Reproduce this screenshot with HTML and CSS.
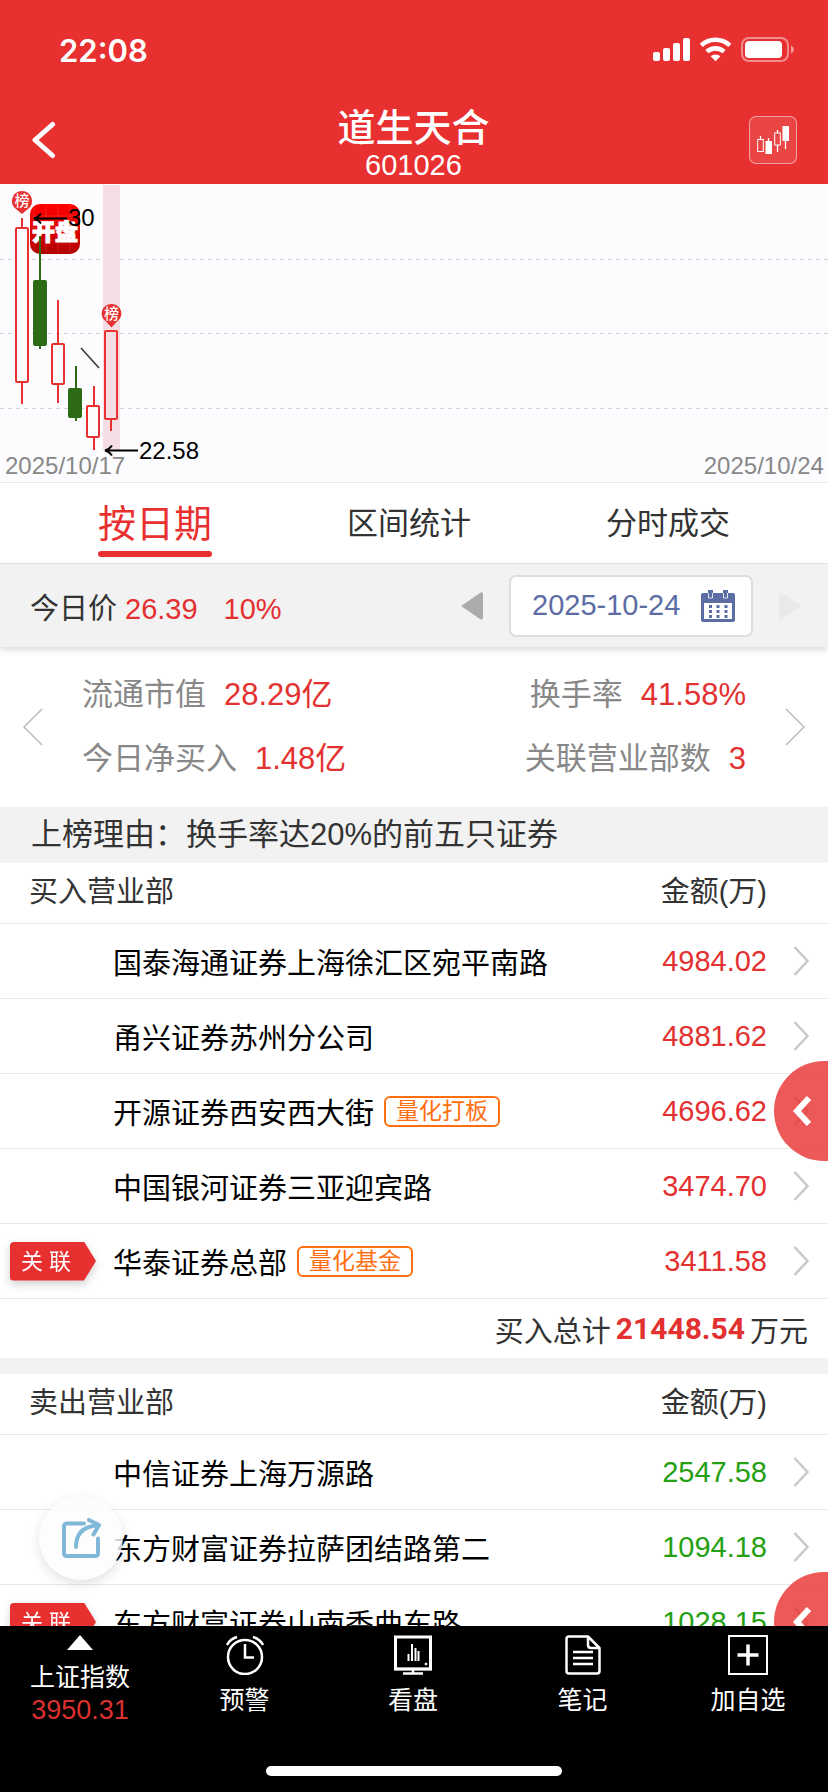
FILE: index.html
```html
<!DOCTYPE html>
<html lang="zh-CN">
<head>
<meta charset="utf-8">
<meta name="viewport" content="width=device-width, initial-scale=1">
<title>道生天合 601026</title>
<link rel="stylesheet" href="styles.css">
</head>
<body>
<div class="app">
  <header class="header">
    <div class="status">
      <span class="clock">22:08</span>
      <svg class="status-icons" width="142" height="26" viewBox="0 0 142 26" fill="#fff" aria-hidden="true">
        <rect x="0" y="15" width="7" height="9" rx="2"/><rect x="10" y="11" width="7" height="13" rx="2"/><rect x="20" y="6" width="7" height="18" rx="2"/><rect x="30" y="1" width="7" height="23" rx="2"/>
        <g fill="none" stroke="#fff" stroke-width="4.6"><path d="M48.200 8.400A21 21 0 0 1 76.800 8.400"/><path d="M53.900 14.600A13 13 0 0 1 71.100 14.600"/></g>
        <path d="M57.600 19.200A7.500 7.500 0 0 1 67.400 19.200L62.500 24.200Z"/>
        <rect x="89" y="1" width="46" height="23" rx="7" fill="none" stroke="#fff" stroke-opacity=".45" stroke-width="2"/>
        <rect x="92" y="4" width="37" height="17" rx="4"/>
        <path d="M138 8.500Q141 10 141 12.500T138 16.500Z" fill-opacity=".5"/>
      </svg>
    </div>
    <div class="nav">
      <button class="icon-btn" aria-label="返回"><svg width="26" height="38" viewBox="0 0 26 38" fill="none" stroke="#fff" stroke-width="5" stroke-linecap="round" stroke-linejoin="round"><path d="M22.500 3.500L5 19L22.500 34.500"/></svg></button>
      <div class="titles"><h1 class="title">道生天合</h1><p class="code">601026</p></div>
      <button class="icon-btn kline-btn" aria-label="K线"><svg width="34" height="30" viewBox="0 0 34 30" fill="none" stroke="#fff"><path d="M4.500 11V14M12.500 13V16M21.500 5V8M21.500 20V27M29.500 14V24" stroke-width="1.300"/><rect x="1.700" y="14.500" width="5.600" height="12"/><rect x="18.700" y="8" width="5.600" height="12"/><path fill="#fff" stroke="none" d="M9.500 16h6.500v13h-6.500zM26.500 1h6.500v15h-6.500z"/></svg></button>
    </div>
  </header>

  <main class="main">
    <section class="chart" aria-label="日K线">
      <svg class="chart-svg" width="100%" height="298">
        <defs><linearGradient id="logo" x1="0" y1="0" x2="0" y2="1"><stop offset="0" stop-color="#ff0000"/><stop offset=".5" stop-color="#e00000"/><stop offset="1" stop-color="#b00000"/></linearGradient></defs>
        <g class="grid"><line x1="0" x2="100%" y1="75.500" y2="75.500"/><line x1="0" x2="100%" y1="149.500" y2="149.500"/><line x1="0" x2="100%" y1="224.500" y2="224.500"/></g>
        <rect x="103" y="1" width="17" height="265" fill="#f5dee3"/>
        <rect x="30" y="20" width="50" height="50" rx="10" fill="url(#logo)"/>
        <path d="M34 24V66M46 21V69M58 21V69M70 21V69M31 32H79M31 44H79M31 56H79" stroke="#fff" stroke-opacity=".12"/>
        <text class="logo-text" x="55" y="56">开盘</text>
        <g class="up"><path d="M22 34V44M22 198V220M58 116V160M58 200V219M94 202V222M94 253V266M111 235V247"/><rect x="16" y="44" width="12" height="154" rx="1"/><rect x="52" y="160" width="12" height="40" rx="1"/><rect x="87" y="222" width="12" height="31" rx="1"/><rect x="105" y="147" width="12" height="88" rx="1"/></g>
        <g class="down"><path d="M40 52V165M76 182V237"/><rect x="34" y="97" width="12" height="64" rx="1"/><rect x="69" y="205" width="12" height="28" rx="1"/></g>
        <path d="M81 164L99 184" stroke="#333" stroke-width="1.500"/>
        <g fill="#e83030"><path d="M22 7a10 10 0 0 1 6 18L22 30L16 25A10 10 0 0 1 22 7Z"/><path d="M111.500 120a9.500 9.500 0 0 1 5.500 17.500L111.500 143.500L106 137.500A9.500 9.500 0 0 1 111.500 120Z"/></g>
        <text class="pin-text" x="22" y="22">榜</text><text class="pin-text" x="111.500" y="135">榜</text>
        <g fill="none" stroke="#000" stroke-width="2"><path d="M34 34.500H67M41 29.500Q38 33.500 34 34.500Q38 35.500 41 39.500M105 266.500H138M112 261.500Q109 265.500 105 266.500Q109 267.500 112 271.500"/></g>
        <text class="mark" x="68" y="42">30</text><text class="mark" x="139" y="275">22.58</text>
        <text class="date" x="5" y="290">2025/10/17</text><text class="date date-end" x="99.500%" y="290">2025/10/24</text>
      </svg>
    </section>

    <nav class="tabs">
      <button class="tab tab-active">按日期</button>
      <button class="tab">区间统计</button>
      <button class="tab">分时成交</button>
    </nav>

    <section class="pricebar">
      <p class="price"><span>今日价</span><span class="red">26.39</span><span class="red pct">10%</span></p>
      <div class="picker">
        <button class="icon-btn" aria-label="前一天"><svg width="22" height="28" viewBox="0 0 22 28" fill="#ababab"><path d="M0 14L19 1Q22 -1 22 3V25Q22 29 19 27Z"/></svg></button>
        <label class="datebox"><input class="date-input" type="text" value="2025-10-24" aria-label="日期">
          <svg width="34" height="32" viewBox="0 0 34 32" fill="#5b6da3"><path fill-rule="evenodd" d="M2 3H7V0H12V3H22V0H27V3H32Q34 3 34 5V30Q34 32 32 32H2Q0 32 0 30V5Q0 3 2 3ZM3 13V29H31V13Z"/><path d="M7.500 3V8H11.500V3M22.500 3V8H26.500V3" fill="none" stroke="#fff" stroke-width=".8"/><path d="M9.500 15V28M17 15V28M25 15V28" stroke="#5b6da3" stroke-width="3" stroke-dasharray="3 2"/></svg>
        </label>
        <button class="icon-btn" aria-label="后一天" disabled><svg width="22" height="28" viewBox="0 0 22 28" fill="#e9e9e9"><path d="M22 14L3 1Q0 -1 0 3V25Q0 29 3 27Z"/></svg></button>
      </div>
    </section>

    <section class="stats">
      <button class="icon-btn" aria-label="上一页"><svg width="20" height="38" viewBox="0 0 20 38" fill="none" stroke="#bbb" stroke-width="1.500"><path d="M19 1L1 19L19 37"/></svg></button>
      <dl class="stat-grid">
        <div class="stat"><dt>流通市值</dt><dd>28.29亿</dd></div>
        <div class="stat stat-end"><dt>换手率</dt><dd>41.58%</dd></div>
        <div class="stat"><dt>今日净买入</dt><dd>1.48亿</dd></div>
        <div class="stat stat-end"><dt>关联营业部数</dt><dd>3</dd></div>
      </dl>
      <button class="icon-btn" aria-label="下一页"><svg width="20" height="38" viewBox="0 0 20 38" fill="none" stroke="#bbb" stroke-width="1.500"><path d="M1 1L19 19L1 37"/></svg></button>
    </section>

    <h2 class="reason">上榜理由：换手率达20%的前五只证券</h2>

    <svg class="defs" aria-hidden="true"><defs>
      <symbol id="go" viewBox="0 0 16 30"><path d="M1.500 1L14.500 15L1.500 29" fill="none" stroke="#c8c8c8" stroke-width="2.500"/></symbol>
      <symbol id="side" viewBox="0 0 20 32"><path d="M17 3L5 16L17 29" fill="none" stroke="#fff" stroke-width="6"/></symbol>
    </defs></svg>

    <table class="seats">
      <colgroup><col class="c-mark"><col><col class="c-amount"><col class="c-go"></colgroup>
      <thead><tr><th class="h-name" colspan="2">买入营业部</th><th class="h-amount">金额(万)</th><th></th></tr></thead>
      <tbody>
        <tr><td></td><td>国泰海通证券上海徐汇区宛平南路</td><td class="amount red">4984.02</td><td class="go"><svg width="16" height="30"><use href="#go"/></svg></td></tr>
        <tr><td></td><td>甬兴证券苏州分公司</td><td class="amount red">4881.62</td><td class="go"><svg width="16" height="30"><use href="#go"/></svg></td></tr>
        <tr><td></td><td><div class="name">开源证券西安西大街<span class="tag">量化打板</span></div></td><td class="amount red">4696.62</td><td class="go"><svg width="16" height="30"><use href="#go"/></svg><button class="side" aria-label="展开"><svg width="20" height="32"><use href="#side"/></svg></button></td></tr>
        <tr><td></td><td>中国银河证券三亚迎宾路</td><td class="amount red">3474.70</td><td class="go"><svg width="16" height="30"><use href="#go"/></svg></td></tr>
        <tr><td><span class="linked"><span class="linked-text">关 联</span></span></td><td><div class="name">华泰证券总部<span class="tag">量化基金</span></div></td><td class="amount red">3411.58</td><td class="go"><svg width="16" height="30"><use href="#go"/></svg></td></tr>
      </tbody>
    </table>
    <p class="total">买入总计<strong class="sum">21448.54</strong>万元</p>

    <table class="seats">
      <colgroup><col class="c-mark"><col><col class="c-amount"><col class="c-go"></colgroup>
      <thead><tr><th class="h-name" colspan="2">卖出营业部</th><th class="h-amount">金额(万)</th><th></th></tr></thead>
      <tbody>
        <tr><td></td><td>中信证券上海万源路</td><td class="amount green">2547.58</td><td class="go"><svg width="16" height="30"><use href="#go"/></svg></td></tr>
        <tr><td></td><td>东方财富证券拉萨团结路第二</td><td class="amount green">1094.18</td><td class="go"><svg width="16" height="30"><use href="#go"/></svg></td></tr>
        <tr><td><span class="linked"><span class="linked-text">关 联</span></span></td><td>东方财富证券山南香曲东路</td><td class="amount green">1028.15</td><td class="go"><svg width="16" height="30"><use href="#go"/></svg><button class="side" aria-label="展开"><svg width="20" height="32"><use href="#side"/></svg></button></td></tr>
      </tbody>
    </table>
  </main>

  <footer class="footer">
    <button class="share" aria-label="分享"><svg width="42" height="42" viewBox="0 0 42 42" fill="none" stroke="#7fb8d8" stroke-width="4" stroke-linecap="round" stroke-linejoin="round"><path d="M23 6.500H6Q3 6.500 3 9.500V36Q3 39 6 39H34Q37 39 37 36V21.500"/><path d="M15 30Q15 10 36 8.500M28 3L38 8L32.500 17.500"/></svg></button>
    <nav class="toolbar">
      <button class="tool index"><svg width="26" height="15" viewBox="0 0 26 15" fill="#fff"><path d="M13 0L26 15H0Z"/></svg><span class="index-name">上证指数</span><span class="index-value">3950.31</span></button>
      <button class="tool"><svg width="40" height="40" viewBox="0 0 40 40" fill="none" stroke="#fff" stroke-width="2.500"><circle cx="20" cy="22" r="17"/><path d="M20 9V22.500H29M2 10Q5 4 12 2M38 10Q35 4 28 2"/></svg><span>预警</span></button>
      <button class="tool"><svg width="40" height="40" viewBox="0 0 40 40" fill="none" stroke="#fff"><rect x="2.500" y="2" width="35" height="32" stroke-width="3"/><path d="M1 34H39M20 34V38M10 38.500H30" stroke-width="2.500"/><path d="M15.500 19V26M19 9V26M22.500 13V26M25.500 16V26" stroke-width="2"/><circle cx="33" cy="29" r="1" fill="#fff"/></svg><span>看盘</span></button>
      <button class="tool"><svg width="40" height="40" viewBox="0 0 40 40" fill="none" stroke="#fff" stroke-width="2.500"><path d="M6 1.500H25L36.500 13V36Q36.500 38.500 34 38.500H6Q3.500 38.500 3.500 36V4Q3.500 1.500 6 1.500ZM25 2V10Q25 13 28 13H36M10 17H30M10 23H30M10 29H30" stroke-linejoin="round"/></svg><span>笔记</span></button>
      <button class="tool"><svg width="40" height="40" viewBox="0 0 40 40" fill="none" stroke="#fff"><rect x="1" y="1" width="38" height="38" stroke-width="2"/><path d="M20 9.500V30.500M9.500 20H30.500" stroke-width="3.500"/></svg><span>加自选</span></button>
    </nav>
    <div class="home"></div>
  </footer>
</div>
</body>
</html>
```
FILE: styles.css
```css
* { box-sizing: border-box; }
body, h1, h2, p, dl, dd { margin: 0; }
body {
  font-family: "Liberation Sans", "Noto Sans CJK SC", sans-serif;
  font-size: 29px;
  color: #333;
  background: #fff;
}
button, input { font: inherit; color: inherit; background: none; border: 0; padding: 0; margin: 0; }
svg { display: block; }
.defs { position: absolute; width: 0; height: 0; }
.red { color: #e33030; }
.green { color: #25a012; }
.icon-btn { display: flex; align-items: center; justify-content: center; flex: none; }

.app { display: flex; flex-direction: column; height: 100vh; }
.header { flex: none; background: #e83030; color: #fff; }
.status { display: flex; justify-content: space-between; align-items: flex-end; height: 96px; padding: 0 33px 33px 59px; }
.clock { font: 600 31px/24px Inter, sans-serif; }
.nav { display: flex; justify-content: space-between; align-items: center; height: 88px; padding: 0 31px 0 30px; }
.kline-btn { width: 48px; height: 48px; border: 1px solid rgba(255, 255, 255, .5); border-radius: 7px; background: rgba(255, 255, 255, .1); }
.titles { flex: 1; padding: 6px 0 0 22px; text-align: center; }
.title { font-size: 38px; line-height: 44px; font-weight: 500; }
.code { line-height: 30px; }

.main { flex: 1; min-height: 0; overflow-y: auto; scrollbar-width: none; }
.chart { background: #fcfcff; border-bottom: 1px solid #e6e8ec; }
.chart-svg { overflow: hidden; }
.grid { stroke: #d0d0d6; stroke-dasharray: 4 4; }
.up { fill: none; stroke: #e83030; stroke-width: 2; }
.down { fill: #2d6a15; stroke: #2d6a15; stroke-width: 2; }
.up rect { fill: #fcfcff; }
.up rect:last-child { fill: #f5dee3; }
.logo-text { font-size: 23px; font-weight: 900; fill: #fff; stroke: #fff; text-anchor: middle; }
.pin-text { font-size: 15px; font-weight: 500; fill: #fff; text-anchor: middle; }
.mark { font-size: 24px; fill: #000; }
.date { font-size: 24px; fill: #888; }
.date-end { text-anchor: end; }

.tabs { display: flex; justify-content: space-between; height: 81px; padding: 0 98px; border-bottom: 1px solid #e4e4e4; }
.tab { display: flex; align-items: center; font-size: 31px; line-height: 40px; height: 74px; padding-top: 8px; }
.tab-active { font-size: 38px; color: #e83030; position: relative; }
.tab-active::after { content: ""; position: absolute; left: 0; right: 0; bottom: 0; height: 6px; border-radius: 3px; background: #e83030; }

.pricebar { display: flex; justify-content: space-between; align-items: center; height: 83px; padding: 0 27px 0 30px; background: #f2f2f2; box-shadow: 0 3px 6px rgba(0, 0, 0, .14); position: relative; }
.price { display: flex; align-items: baseline; gap: 8px; }
.pct { padding-left: 18px; }
.picker { display: flex; align-items: center; gap: 26px; }
.datebox { display: flex; align-items: center; gap: 17px; height: 62px; padding: 0 16px 0 21px; border: 2px solid #ddd; border-radius: 7px; background: #fff; }
.date-input { width: 152px; color: #5b6da3; outline: 0; }

.stats { display: flex; align-items: center; gap: 39px; height: 160px; padding: 0 23px; font-size: 31px; }
.stat-grid { flex: 1; display: grid; grid-template-columns: auto auto; justify-content: space-between; row-gap: 20px; }
.stat { display: flex; gap: 18px; line-height: 44px; }
.stat-end { justify-content: flex-end; }
.stat dt { color: #888; }
.stat dd { color: #e33030; }

.reason { font-size: 31px; line-height: 56px; font-weight: 400; padding-left: 31px; background: #f2f2f2; }

.seats { width: 100%; table-layout: fixed; border-spacing: 0; color: #000; }
.c-mark { width: 113px; }
.c-amount { width: 130px; }
.c-go { width: 61px; }
.seats th { height: 61px; padding: 0 0 8px; font-weight: 400; color: #333; border-bottom: 1px solid #e8e8e8; }
.seats td { height: 75px; padding: 0; border-bottom: 1px solid #e8e8e8; }
.seats .h-name { text-align: left; padding-left: 29px; }
.seats .h-amount, .seats .amount { text-align: right; }
.seats .go { position: relative; padding-left: 26px; }
.name { display: flex; align-items: center; gap: 10px; }
.tag { font-size: 23px; line-height: 27px; padding: 0 10px; color: #ff6f0f; border: 2px solid #ff6f0f; border-radius: 6px; }
.linked { display: block; margin-left: 10px; filter: drop-shadow(0 4px 4px rgba(0, 0, 0, .18)); }
.linked-text { display: block; width: 86px; height: 39px; line-height: 39px; padding-left: 11px; font-size: 22px; color: #fff; background: #e83030; border-radius: 4px 0 0 4px; clip-path: polygon(0 0, 74px 0, 100% 50%, 74px 100%, 0 100%); }
.side { position: absolute; right: 0; top: 50%; width: 54px; height: 100px; margin-top: -50px; padding-left: 18px; border-radius: 50px 0 0 50px; background: rgba(232, 48, 48, .8); z-index: 1; }
.total { display: flex; justify-content: flex-end; align-items: center; gap: 5px; height: 75px; padding-right: 20px; border-bottom: 16px solid #f2f2f2; }
.sum { font: 700 30px/40px Roboto, sans-serif; color: #e33030; }

.footer { flex: none; position: relative; z-index: 2; height: 166px; background: #000; color: #fff; }
.share { position: absolute; left: 39px; bottom: 212px; width: 84px; height: 84px; padding-left: 22px; border-radius: 50%; background: rgba(252, 252, 252, .82); box-shadow: 0 4px 12px rgba(0, 0, 0, .12); }
.toolbar { display: grid; grid-template-columns: 160fr 169fr 168fr 171fr 160fr; height: 140px; }
.tool { display: flex; flex-direction: column; align-items: center; gap: 8px; padding-top: 9px; font-size: 25px; line-height: 34px; }
.index { gap: 0; }
.index-name { padding-top: 10px; }
.index-value { font-size: 27px; color: #dc3030; line-height: 32px; }
.home { width: 296px; height: 10px; margin: 0 auto; border-radius: 5px; background: #fff; }
```
